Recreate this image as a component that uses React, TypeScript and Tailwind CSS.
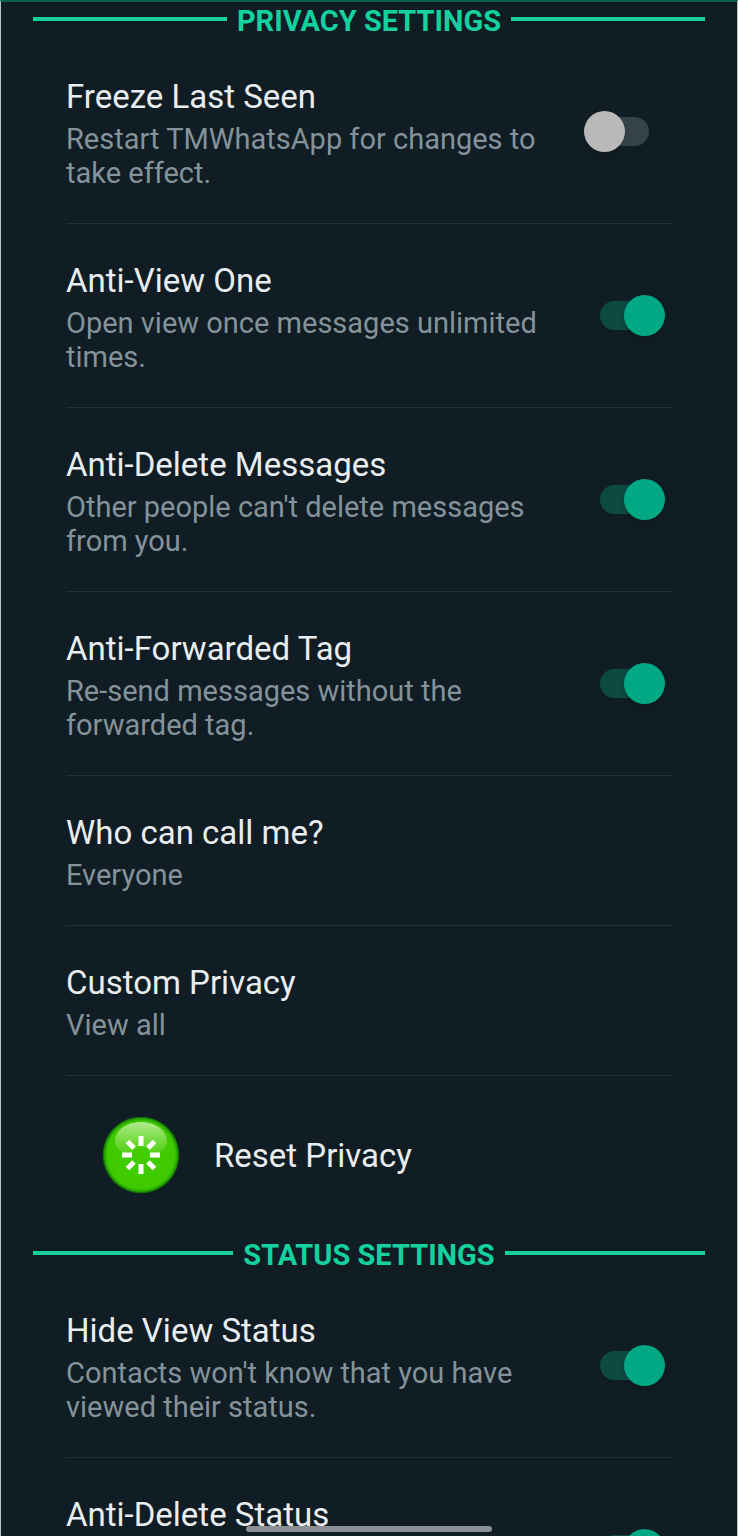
import { useState } from 'react';

interface Setting {
  id: string;
  title: string;
  summary?: string;
  enabled: boolean;
}

const privacySettings: Setting[] = [
  { id: 'freeze', title: 'Freeze Last Seen', summary: 'Restart TMWhatsApp for changes to take effect.', enabled: false },
  { id: 'viewOnce', title: 'Anti-View One', summary: 'Open view once messages unlimited times.', enabled: true },
  { id: 'deleteMessages', title: 'Anti-Delete Messages', summary: "Other people can't delete messages from you.", enabled: true },
  { id: 'forwarded', title: 'Anti-Forwarded Tag', summary: 'Re-send messages without the forwarded tag.', enabled: true },
];

const statusSettings: Setting[] = [
  { id: 'hideView', title: 'Hide View Status', summary: "Contacts won't know that you have viewed their status.", enabled: true },
  { id: 'deleteStatus', title: 'Anti-Delete Status', enabled: true },
];

function SectionHeader({ title }: { title: string }) {
  return (
    <div className="flex h-[38px] items-center gap-[10px] px-8">
      <span className="mb-1 h-1 flex-1 bg-[#15d1a0]"></span>
      <h2 className="text-[29px] leading-[38px] font-bold whitespace-nowrap text-[#15d1a0]">{title}</h2>
      <span className="mb-1 h-1 flex-1 bg-[#15d1a0]"></span>
    </div>
  );
}

function RowText({ title, summary }: { title: string; summary?: string }) {
  return (
    <span className="flex flex-1 flex-col gap-[6px] self-start text-left">
      <span className="text-[33px] leading-[38px] text-[#e9edef]">{title}</span>
      {summary && <span className="text-[29px] leading-[34px] text-[#84929a]">{summary}</span>}
    </span>
  );
}

function SwitchRow({ setting }: { setting: Setting }) {
  const [on, setOn] = useState(setting.enabled);

  return (
    <label
      htmlFor={setting.id}
      className="mx-[65px] flex min-h-[184px] cursor-pointer items-center gap-8 border-b border-[#243037] pt-[38px] pb-[33px]"
    >
      <RowText title={setting.title} summary={setting.summary} />
      <input
        type="checkbox"
        role="switch"
        id={setting.id}
        checked={on}
        onChange={(e) => setOn(e.target.checked)}
        className="relative mr-[23px] mb-[6px] h-[29px] w-[49px] shrink-0 cursor-pointer appearance-none rounded-full bg-[#354249] before:absolute before:-top-[6px] before:-left-4 before:size-[41px] before:rounded-full before:bg-[#b9b9b9] before:shadow-md checked:bg-[#0c4a42] checked:before:left-6 checked:before:bg-[#00a884]"
      />
    </label>
  );
}

function LinkRow({ title, summary }: { title: string; summary: string }) {
  return (
    <button
      type="button"
      className="mx-[65px] flex cursor-pointer border-b border-[#243037] pt-[38px] pb-[33px]"
    >
      <RowText title={title} summary={summary} />
    </button>
  );
}

function ResetIcon() {
  return (
    <svg viewBox="0 0 78 78" className="size-[78px]" aria-hidden="true">
      <defs>
        <radialGradient id="ball">
          <stop offset="0" stopColor="#43cc00" />
          <stop offset="0.88" stopColor="#3fca00" />
          <stop offset="0.95" stopColor="#229e00" />
          <stop offset="1" stopColor="#0a4a0c" />
        </radialGradient>
        <linearGradient id="gloss" x1="0" y1="0" x2="0" y2="1">
          <stop offset="0" stopColor="#d8f7c0" stopOpacity="0.75" />
          <stop offset="1" stopColor="#b5f08a" stopOpacity="0.15" />
        </linearGradient>
      </defs>
      <circle cx="39" cy="38" r="38.5" fill="url(#ball)" />
      <path d="M39 5C24 5 13 14 13 24C13 30 17 34 23 36C28 37 50 37 55 36C61 34 65 30 65 24C65 14 54 5 39 5Z" fill="url(#gloss)" />
      <circle cx="39" cy="38" r="9" fill="#43cc00" />
      <g stroke="#fff" strokeWidth="5">
        <path d="M39 19V29M39 47V57M20 38H30M48 38H58" />
        <path d="M25.500 24.500L32 31M46 45L52.500 51.500M52.500 24.500L46 31M32 45L25.500 51.500" />
      </g>
    </svg>
  );
}

function App() {
  return (
    <div className="relative flex h-screen flex-col border-x border-t-2 border-x-[#b9c0c2] border-t-[#0a5f50] bg-[#111d24] font-[Roboto,sans-serif]">
      <main className="flex min-h-0 flex-1 flex-col overflow-y-auto [scrollbar-width:none] *:shrink-0">
        <SectionHeader title="PRIVACY SETTINGS" />
        {privacySettings.map((setting) => (
          <SwitchRow key={setting.id} setting={setting} />
        ))}
        <LinkRow title="Who can call me?" summary="Everyone" />
        <LinkRow title="Custom Privacy" summary="View all" />

        <button type="button" className="flex h-[160px] cursor-pointer items-center gap-[34px] px-[101px]">
          <ResetIcon />
          <span className="text-[33px] leading-[38px] text-[#e9edef]">Reset Privacy</span>
        </button>

        <SectionHeader title="STATUS SETTINGS" />
        {statusSettings.map((setting) => (
          <SwitchRow key={setting.id} setting={setting} />
        ))}
      </main>

      {/* Gesture bar */}
      <div className="absolute bottom-1 left-1/3 h-[6px] w-1/3 rounded-full bg-[#8b9094]"></div>
    </div>
  );
}

export default App;
